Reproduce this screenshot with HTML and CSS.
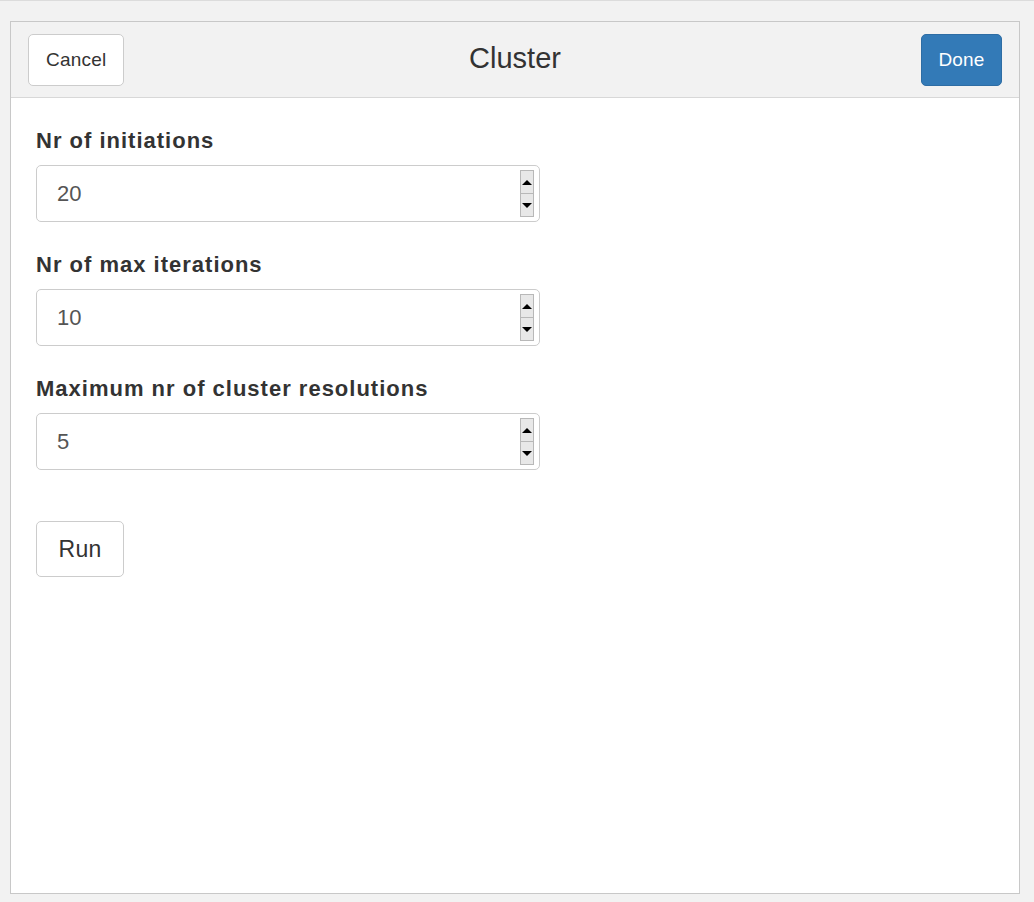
FILE: index.html
```html
<!DOCTYPE html>
<html>
<head>
<meta charset="utf-8">
<link rel="stylesheet" href="styles.css">
</head>
<body>
<div class="topline"></div>
<div class="panel">
  <div class="header">
    <div class="left"><button class="btn">Cancel</button></div>
    <div class="title">Cluster</div>
    <div class="right"><button class="btn btn-primary">Done</button></div>
  </div>
  <div class="content">
    <div class="group">
      <label class="label">Nr of initiations</label>
      <div class="field">
        <input class="value" type="text" value="20">
        <div class="spin"><span class="up"></span><span class="down"></span></div>
      </div>
    </div>
    <div class="group">
      <label class="label">Nr of max iterations</label>
      <div class="field">
        <input class="value" type="text" value="10">
        <div class="spin"><span class="up"></span><span class="down"></span></div>
      </div>
    </div>
    <div class="group">
      <label class="label">Maximum nr of cluster resolutions</label>
      <div class="field">
        <input class="value" type="text" value="5">
        <div class="spin"><span class="up"></span><span class="down"></span></div>
      </div>
    </div>
    <button class="btn btn-run">Run</button>
  </div>
</div>
</body>
</html>
```
FILE: styles.css
```css
html, body {
  margin: 0;
  padding: 0;
  background: #f2f2f2;
  font-family: "Liberation Sans", Arial, sans-serif;
  color: #333;
}
* {
  box-sizing: border-box;
}
.topline {
  height: 1px;
  background: #dcdcdc;
}
.panel {
  margin: 20px 0 0 10px;
  width: 1010px;
  height: 873px;
  border: 1px solid #c8c8c8;
  background: #fff;
  display: flex;
  flex-direction: column;
}
.header {
  background: #f2f2f2;
  border-bottom: 1px solid #d8d8d8;
  height: 76px;
  display: grid;
  grid-template-columns: 1fr auto 1fr;
  align-items: center;
  padding: 0 17px 0 17px;
}
.left {
  display: flex;
  justify-content: flex-start;
}
.right {
  display: flex;
  justify-content: flex-end;
}
.title {
  font-size: 29px;
  color: #333;
  margin-top: -2px;
}
.btn {
  font-family: "Liberation Sans", Arial, sans-serif;
  font-size: 19px;
  color: #333;
  background: #fff;
  border: 1px solid #ccc;
  border-radius: 5px;
  height: 52px;
  padding: 0 17px;
  letter-spacing: 0.2px;
}
.btn-primary {
  background: #337ab7;
  border-color: #2e6da4;
  color: #fff;
  padding: 0 16px;
  width: 81px;
}
.content {
  padding: 27px 25px 0 25px;
}
.group {
  margin-bottom: 27px;
}
.label {
  display: block;
  font-weight: bold;
  font-size: 22px;
  letter-spacing: 1px;
  margin-bottom: 10px;
  line-height: 30px;
  padding-top: 1px;
  height: 30px;
}
.field {
  width: 504px;
  height: 57px;
  border: 1px solid #ccc;
  border-radius: 5px;
  display: flex;
  align-items: center;
  padding: 0 5px 0 0;
}
.value {
  flex: 1;
  min-width: 0;
  border: none;
  outline: none;
  background: transparent;
  font-family: "Liberation Sans", Arial, sans-serif;
  font-size: 22px;
  color: #555;
  padding: 0 0 0 20px;
  height: 100%;
}
.spin {
  width: 14px;
  height: 47px;
  display: flex;
  flex-direction: column;
  border: 1px solid #b8b8b8;
  background: #e8e8e8;
}
.spin span {
  flex: 1;
  display: flex;
  align-items: center;
  justify-content: center;
}
.spin .up {
  border-bottom: 1px solid #b8b8b8;
}
.spin .up::after {
  content: "";
  border-left: 5px solid transparent;
  border-right: 5px solid transparent;
  border-bottom: 5px solid #000;
}
.spin .down::after {
  content: "";
  border-left: 5px solid transparent;
  border-right: 5px solid transparent;
  border-top: 5px solid #000;
}
.btn-run {
  margin-top: 24px;
  height: 56px;
  width: 88px;
  font-size: 23px;
  padding: 0;
}
```
